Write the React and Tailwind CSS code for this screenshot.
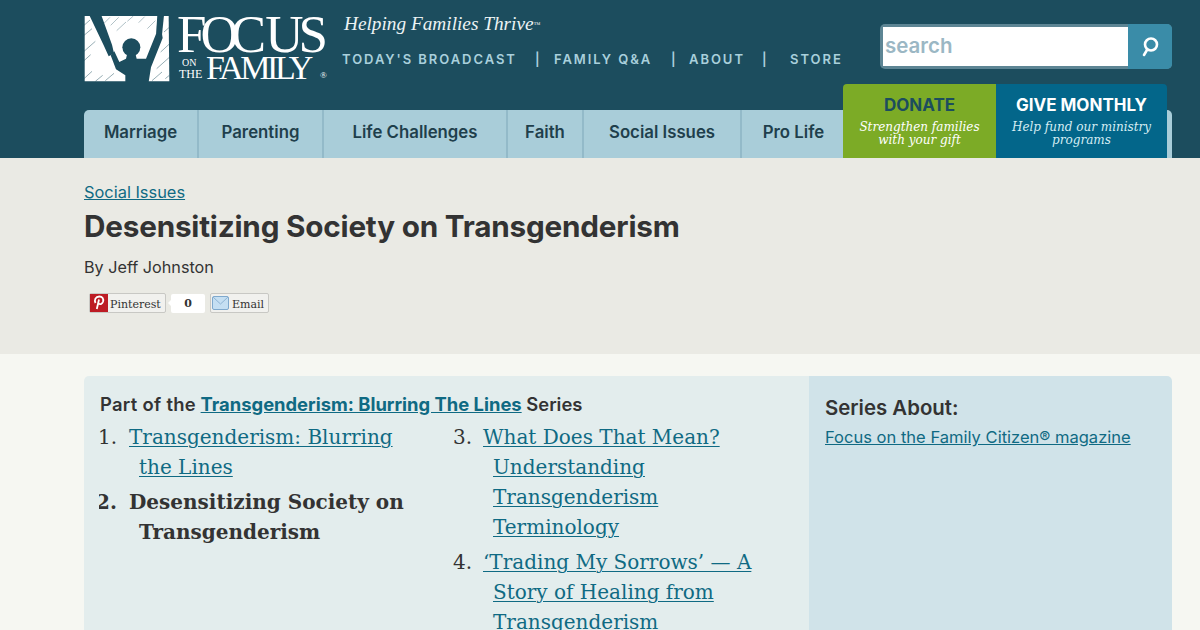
const sans = "font-['Inter','Liberation_Sans',sans-serif]";

function LogoMark({ width = 90, height = 72, className = "" }) {
  return (
    <svg width={width} height={height} viewBox="0 0 270 216" className={className}>
      <path d="M8 12H260L262 208H8Z" fill="#ffffff" />
      <path d="M22 10H58L90 98L96 124L80 133L65 100Z" fill="#1c4d5e" />
      <circle cx="148" cy="106" r="27" fill="#1c4d5e" />
      <path d="M86 130L97 118L112 150L132 140L136 124H160L164 140H192L222 66H240L242 78L207 166L200 210H130V190L102 172Z" fill="#1c4d5e" />
      <path d="M226 10H246L240 68H222Z" fill="#1c4d5e" />
      <path d="M6 40L24 24M6 70L30 50M6 118L40 88M6 146L26 128M6 200L30 178M40 208L62 190M70 206L96 184M210 206L240 180M224 170L262 136M236 120L262 96M246 60L262 46M250 200L262 190" stroke="#1c4d5e" strokeWidth="2" fill="none" opacity="0.7" />
      <path d="M66 34L84 16M86 40L110 16M104 56L132 30M136 28L154 12M170 32L188 14M196 50L220 26" stroke="#1c4d5e" strokeWidth="1.5" fill="none" opacity="0.7" />
    </svg>
  );
}

function Logo() {
  return (
    <div className="relative h-[66px] w-[243px] shrink-0">
      <LogoMark className="absolute left-[-2px] top-[-3px]" />
      <div className="absolute left-[88px] top-0 font-['Liberation_Serif',serif] text-white">
        <span className="absolute left-[5px] top-[-7px] flex text-[53px] leading-[53px]">
          <span>F</span>
          <span className="ml-[-6px]">O</span>
          <span className="ml-[-8px]">C</span>
          <span className="ml-[-1px]">U</span>
          <span className="ml-[-5px]">S</span>
        </span>
        <span className="absolute left-[10px] top-[43px] text-[10px] leading-[10px]">ON</span>
        <span className="absolute left-[7px] top-[53px] text-[12px] leading-[12px]">THE</span>
        <span className="absolute left-[34px] top-[36px] text-[34px] leading-[34px] tracking-[-3.4px]">FAMILY</span>
        <span className="absolute left-[148px] top-[56px] text-[9px] leading-[9px]">®</span>
      </div>
    </div>
  );
}

function SearchBox() {
  return (
    <div className="flex h-[45px] w-[292px] overflow-hidden rounded-[5px] bg-[#5d8594] pl-[3px] pt-[3px]">
      <div className={`h-[39px] w-[245px] bg-white pl-[2px] text-[20.5px] font-semibold leading-[37px] text-[#9bb7c4] ${sans}`}>search</div>
      <div className="flex h-[45px] flex-1 -mt-[3px] items-center justify-center bg-[#3a8ca8]">
        <svg width="20" height="22" viewBox="0 0 20 22" fill="none" stroke="#fff" strokeWidth="2.6">
          <circle cx="11" cy="8.5" r="6" />
          <path d="M7 14L4 19" strokeLinecap="round" />
        </svg>
      </div>
    </div>
  );
}

function NavItem({ label, w, last }) {
  return (
    <div className={`flex h-full items-center justify-center pb-[2px] text-[16.8px] font-semibold text-[#1f3f4c] ${sans} ${last ? "" : "border-r-2 border-[#93bac9]"}`} style={{ width: w }}>
      {label}
    </div>
  );
}

function Tab({ title, sub, bg, titleColor, subColor, w }) {
  return (
    <div className={`flex flex-col items-center pt-[10px] ${bg}`} style={{ width: w }}>
      <div className={`text-[17px] font-bold leading-[22px] ${titleColor} ${sans}`}>{title}</div>
      <div className={`mt-[5px] whitespace-pre-line text-center font-['DejaVu_Serif',serif] text-[12px] italic leading-[13px] ${subColor}`}>{sub}</div>
    </div>
  );
}

function Header() {
  return (
    <header className="relative h-[158px] bg-[#1c4d5e] pl-[84px]">
      <div className="flex pt-[15px]">
        <Logo />
        <div className="w-[554px] pl-[15px]">
          <div className="ml-[2px] mt-[-5px] whitespace-nowrap font-['Liberation_Serif',serif] text-[19.3px] italic leading-[28px] text-[#ecf3f4]">
            Helping Families Thrive<sup className="text-[7px]">™</sup>
          </div>
          <div className={`mt-[11px] flex text-[13px] font-semibold leading-[20px] tracking-[1.95px] text-[#a9d0dc] ${sans}`}>
            <span className="w-[193px] whitespace-nowrap">TODAY'S BROADCAST</span>
            <span className="w-[19px]">|</span>
            <span className="w-[117px] whitespace-nowrap">FAMILY Q&amp;A</span>
            <span className="w-[18px]">|</span>
            <span className="w-[73px] whitespace-nowrap">ABOUT</span>
            <span className="w-[28px]">|</span>
            <span>STORE</span>
          </div>
        </div>
        <div className="ml-[-1px] mt-[9px]">
          <SearchBox />
        </div>
      </div>
      <nav className="absolute bottom-0 left-[84px] flex h-[48px] w-[1088px] rounded-t-[5px] bg-[#a9cdd9]">
        <NavItem label="Marriage" w={115} />
        <NavItem label="Parenting" w={125} />
        <NavItem label="Life Challenges" w={184} />
        <NavItem label="Faith" w={76} />
        <NavItem label="Social Issues" w={158} />
        <NavItem label="Pro Life" w={103} last />
      </nav>
      <div className="absolute bottom-0 left-[843px] flex h-[74px] overflow-hidden rounded-t-[4px]">
        <Tab title="DONATE" sub={"Strengthen families\nwith your gift"} bg="bg-[#7cab26]" titleColor="text-[#1c4d5e]" subColor="text-white" w={153} />
        <Tab title="GIVE MONTHLY" sub={"Help fund our ministry\nprograms"} bg="bg-[#03668a]" titleColor="text-white" subColor="text-[#d5edf3]" w={171} />
      </div>
    </header>
  );
}

function Share() {
  return (
    <div className="mt-[14px] ml-[5px] flex h-[21px] items-center font-['DejaVu_Serif',serif] text-[11px] text-[#333]">
      <div className="flex h-[20px] w-[77px] items-center rounded-[2px] border border-[#c8c8c4] bg-[#f1f1ee]">
        <span className="flex h-[18px] w-[18px] items-center justify-center bg-[#bd1c24]">
          <svg width="12" height="15" viewBox="0 0 12 15" fill="none" stroke="#fff" strokeWidth="1.8">
            <path d="M2.5 8C1 5 2.5 1.5 6.3 1.5C9.5 1.5 10.8 4 10 6.8C9.2 9.3 6.8 9.8 5.6 8.2M6 4.5L3.8 14" />
          </svg>
        </span>
        <span className="ml-[2px] pt-[3px] leading-none">Pinterest</span>
      </div>
      <div className="relative ml-[5px] mt-[2px] flex h-[19px] w-[34px] items-center justify-center rounded-[2px] bg-white pt-[1px] text-[11px] font-bold">
        <span className="absolute left-[-3px] top-[6px] h-0 w-0 border-y-[3px] border-r-[3px] border-y-transparent border-r-white" />
        0
      </div>
      <div className="ml-[5px] flex h-[20px] w-[59px] items-center rounded-[2px] border border-[#c8c8c4] bg-[#f1f1ee]">
        <svg width="18" height="16" viewBox="0 0 18 16" className="ml-px shrink-0">
          <rect x="0.5" y="1.5" width="16" height="13" rx="1.5" fill="#c5dff2" stroke="#7fa9cd" />
          <path d="M1 2L8.5 9L16 2" fill="none" stroke="#8fb4d4" />
        </svg>
        <span className="ml-[2px] pt-[3px] leading-none">Email</span>
      </div>
    </div>
  );
}

function Item({ n, bold, lines, numClass, className = "" }) {
  return (
    <li className={`flex ${className}`}>
      <span className={`shrink-0 text-[#333] ${numClass}`}>{n}.</span>
      <div className="min-w-0">
        {lines.map((l, i) => (
          <div key={i} className={`whitespace-nowrap ${i ? "pl-[10px]" : ""}`}>
            {bold ? (
              <span className="font-bold text-[#333]">{l}</span>
            ) : (
              <a className="text-[#0f6a83] underline decoration-1 underline-offset-2">{l}</a>
            )}
          </div>
        ))}
      </div>
    </li>
  );
}

export default function App() {
  return (
    <div className="h-[630px] overflow-hidden bg-[#f6f7f2]">
      <Header />
      <section className={`h-[196px] bg-[#eaeae4] pl-[84px] pt-[24px] text-[#333] ${sans}`}>
        <a className="block text-[16.4px] leading-[21px] text-[#0f6a83] underline">Social Issues</a>
        <h1 className="mt-[5px] text-[29.7px] font-bold leading-[36px] tracking-[-0.2px] text-[#333]">Desensitizing Society on Transgenderism</h1>
        <div className="mt-[12px] text-[16.2px] leading-[22px]">By Jeff Johnston</div>
        <Share />
      </section>
      <div className="pl-[84px] pr-[28px] pt-[22px]">
        <div className="flex h-[300px] overflow-hidden rounded-t-[5px]">
          <div className="w-[725px] bg-[#e3eded] pl-[16px] pt-[16px]">
            <div className={`whitespace-nowrap text-[18.4px] font-semibold leading-[24px] text-[#333] ${sans}`}>
              <span className="tracking-[0.3px]">Part of the</span> <a className="font-bold text-[#0f6a83] underline">Transgenderism: Blurring The Lines</a> Series
            </div>
            <div className="flex pt-[6px] font-['DejaVu_Serif',serif] text-[20px] leading-[30px]">
              <ol className="ml-[-1px] w-[354px] overflow-hidden">
                <Item n={1} numClass="ml-[-1px] w-[31px]" lines={["Transgenderism: Blurring", "the Lines"]} />
                <Item n={2} bold numClass="ml-[-3px] w-[33px] font-bold" lines={["Desensitizing Society on", "Transgenderism"]} className="mt-[5px]" />
              </ol>
              <ol className="min-w-0 flex-1">
                <Item n={3} numClass="w-[30px]" lines={["What Does That Mean?", "Understanding", "Transgenderism", "Terminology"]} />
                <Item n={4} numClass="w-[30px]" lines={["‘Trading My Sorrows’ — A", "Story of Healing from", "Transgenderism"]} className="mt-[5px]" />
              </ol>
            </div>
          </div>
          <div className={`flex-1 bg-[#d0e3e9] pl-[16px] pt-[20px] ${sans}`}>
            <div className="text-[20.4px] font-semibold leading-[24px] text-[#333]">Series About:</div>
            <a className="mt-[5px] block text-[16.55px] leading-[24px] text-[#0f6a83] underline">Focus on the Family Citizen® magazine</a>
          </div>
        </div>
      </div>
    </div>
  );
}
